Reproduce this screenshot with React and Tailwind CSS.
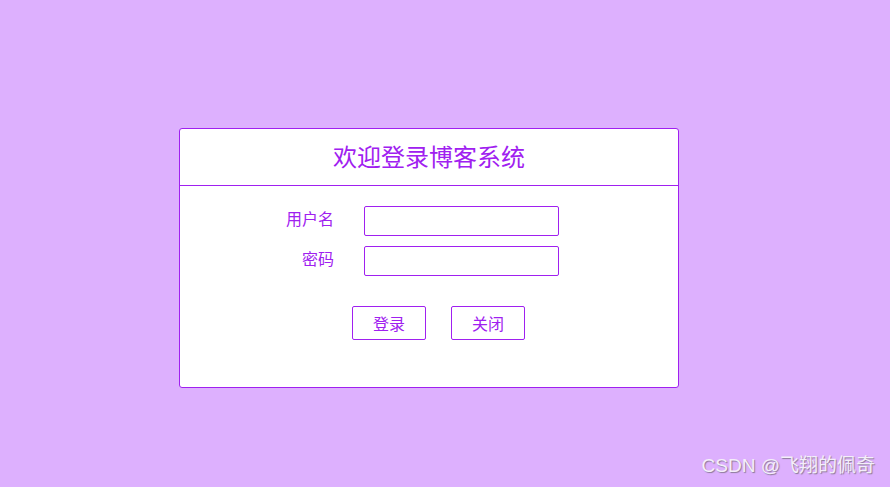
export default function App() {
  return (
    <div
      className="relative w-full h-[487px] overflow-hidden bg-[#ddb0fe] pt-[128px] pl-[179px]"
      style={{ fontFamily: '"Microsoft YaHei", "Noto Sans CJK SC", sans-serif' }}
    >
      <div className="w-[500px] h-[260px] bg-white border border-[#a020f0] rounded-[3px]">
        <div className="h-[57px] border-b border-[#a020f0] flex items-center justify-center">
          <h1 className="text-[24px] text-[#a020f0] leading-none pb-[2px]">欢迎登录博客系统</h1>
        </div>
        <div className="pt-[20px]">
          <div className="flex items-start">
            <label className="w-[154px] text-right text-[16px] leading-[24px] text-[#a020f0]">用户名</label>
            <input className="ml-[30px] w-[195px] h-[30px] border border-[#a020f0] rounded-[2px] outline-none px-1" />
          </div>
          <div className="flex items-start mt-[10px]">
            <label className="w-[154px] text-right text-[16px] leading-[24px] text-[#a020f0]">密码</label>
            <input type="password" className="ml-[30px] w-[195px] h-[30px] border border-[#a020f0] rounded-[2px] outline-none px-1" />
          </div>
          <div className="flex mt-[30px] ml-[172px] gap-[25px]">
            <button className="w-[74px] h-[34px] border border-[#a020f0] rounded-[2px] bg-white text-[16px] text-[#a020f0]">登录</button>
            <button className="w-[74px] h-[34px] border border-[#a020f0] rounded-[2px] bg-white text-[16px] text-[#a020f0]">关闭</button>
          </div>
        </div>
      </div>
      <div
        className="absolute right-[15px] bottom-[7px] text-[19px] text-[#f4eefa] [text-shadow:1px_1px_1px_#8a7a96]"
        style={{ fontFamily: '"Liberation Sans", "Noto Sans CJK SC", sans-serif' }}
      >
        CSDN @飞翔的佩奇
      </div>
    </div>
  );
}
